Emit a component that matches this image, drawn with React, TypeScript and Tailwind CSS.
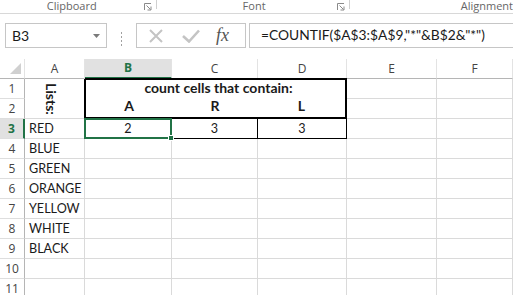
import React from "react";

function Launcher() {
  return (
    <svg width="8" height="8" viewBox="0 0 8 8" className="shrink-0">
      <path d="M0.5 7V0.5H7" stroke="#8a8a8a" strokeWidth="1" fill="none" />
      <path d="M2.5 2.5L6.5 6.5" stroke="#8a8a8a" strokeWidth="1" fill="none" />
      <path d="M3.5 7H7V3.5" stroke="#8a8a8a" strokeWidth="1" fill="none" />
    </svg>
  );
}

const cell = "border-r border-b border-[#dadada] flex items-center [font-family:Lato,sans-serif] text-[12.6px] text-[#1a1a1a] pt-[2px]";
const rowHdr = "border-r border-b border-r-[#b5b5b5] border-b-[#dedede] flex items-center justify-center [font-family:'Open_Sans',sans-serif] text-[12px] text-[#444] pt-[1px]";
const colHdr = "border-r border-b border-r-[#e3e3e3] border-b-[#b5b5b5] flex items-center justify-center [font-family:'Open_Sans',sans-serif] text-[12px] text-[#444]";

export default function App() {
  const lists = ["BLUE", "GREEN", "ORANGE", "YELLOW", "WHITE", "BLACK", "", ""];
  return (
    <div className="w-[513px] h-[295px] overflow-hidden bg-white relative">
      {/* ribbon group labels */}
      <div className="h-[14px] border-b border-[#d8d8d8] flex items-start [font-family:'Open_Sans',sans-serif] text-[11px] text-[#666] leading-[12px]">
        <span className="w-[143px] text-center pl-[1px]">Clipboard</span>
        <div className="mt-[3px] ml-[2px]"><Launcher /></div>
        <div className="ml-[4px] w-px h-[9px] bg-[#d0d0d0]" />
        <span className="w-[180px] text-center pl-[14px]">Font</span>
        <div className="mt-[3px]"><Launcher /></div>
        <div className="ml-[4px] w-px h-[9px] bg-[#d0d0d0]" />
        <span className="ml-[111px] whitespace-nowrap">Alignment</span>
      </div>

      {/* formula bar */}
      <div className="h-[45px] flex items-start pt-[9px]">
        <div className="ml-[5px] w-[102px] h-[25px] border border-[#c6c6c6] flex items-center justify-between pl-[6px] pr-[6px] [font-family:Lato,sans-serif] text-[14px] text-[#1a1a1a]">
          <span>B3</span>
          <svg width="7" height="4" viewBox="0 0 7 4"><path d="M0 0H7L3.5 4Z" fill="#7a7a7a" /></svg>
        </div>
        <div className="ml-[14px] mt-[9px] flex flex-col gap-[2px]">
          <div className="w-px h-[2px] bg-[#a0a0a0]" />
          <div className="w-px h-[2px] bg-[#a0a0a0]" />
          <div className="w-px h-[2px] bg-[#a0a0a0]" />
          <div className="w-px h-[2px] bg-[#a0a0a0]" />
        </div>
        <div className="ml-[14px] w-[110px] h-[25px] border border-[#c6c6c6] flex items-center">
          <svg width="20" height="14" viewBox="0 0 20 14" className="ml-[9px]">
            <path d="M4 1L16 13M16 1L4 13" stroke="#c4c4c4" strokeWidth="2" fill="none" />
          </svg>
          <svg width="20" height="14" viewBox="0 0 20 14" className="ml-[15px]">
            <path d="M2 7L8 12.5L18 1.5" stroke="#c4c4c4" strokeWidth="2.6" fill="none" />
          </svg>
          <span className="ml-[15px] [font-family:'Liberation_Serif',serif] italic text-[18px] text-[#555] leading-none -mt-[2px]">fx</span>
        </div>
        <div className="ml-[3px] flex-1 h-[25px] border border-r-0 border-[#c6c6c6] flex items-center pl-[11px] [font-family:Lato,sans-serif] text-[13.8px] text-[#1a1a1a] whitespace-nowrap">
          =COUNTIF($A$3:$A$9,"*"&amp;B$2&amp;"*")
        </div>
      </div>

      {/* grid */}
      <div className="grid grid-cols-[25px_60px_87px_86px_89px_90px_76px] grid-rows-[20px_repeat(11,20px)]">
        {/* header row */}
        <div className="border-r border-b border-r-[#e3e3e3] border-b-[#b5b5b5] relative">
          <svg width="11" height="11" viewBox="0 0 11 11" className="absolute right-[3px] bottom-[4px]">
            <path d="M11 0V11H0Z" fill="#d0d0d0" />
          </svg>
        </div>
        <div className={colHdr}>A</div>
        <div className="border-r border-r-[#e3e3e3] border-b-2 border-b-[#217346] bg-[#e1e1e1] flex items-center justify-center [font-family:'Open_Sans',sans-serif] text-[12px] font-bold text-[#217346]">B</div>
        <div className={colHdr}>C</div>
        <div className={colHdr}>D</div>
        <div className={colHdr}>E</div>
        <div className={colHdr}>F</div>

        {/* row 1 */}
        <div className={rowHdr}>1</div>
        <div className="row-span-2 border-b border-[#dadada] border-r border-r-black flex items-center justify-center">
          <span className="[writing-mode:vertical-rl] [font-family:Lato,sans-serif] font-bold text-[14px] text-[#1a1a1a] ml-[-6px]">Lists:</span>
        </div>
        <div className="col-span-3 row-span-2 border-t-2 border-l border-r-2 border-b-2 border-black -mt-[1px] bg-white grid grid-rows-2 grid-cols-[86px_86px_1fr] [font-family:Lato,sans-serif] font-bold text-[14px] text-[#1a1a1a]">
          <div className="col-span-3 flex items-end justify-center pb-[1px] pl-[6px]">count cells that contain:</div>
          <div className="flex items-end justify-center pb-[1px]">A</div>
          <div className="flex items-end justify-center pb-[1px]">R</div>
          <div className="flex items-end justify-center pb-[1px]">L</div>
        </div>
        <div className={cell} />
        <div className={cell} />

        {/* row 2 */}
        <div className={rowHdr}>2</div>
        <div className={cell} />
        <div className={cell} />

        {/* row 3 */}
        <div className="border-b border-b-[#dedede] border-r-2 border-r-[#217346] bg-[#e1e1e1] flex items-center justify-center [font-family:'Open_Sans',sans-serif] text-[12px] font-bold text-[#217346] pt-[1px]">3</div>
        <div className={`${cell} border-r-black pl-[4px]`}>RED</div>
        <div className={`${cell} border-r-black border-b-black justify-center relative`}>
          2
          <div className="absolute -left-[1px] -top-[1px] -right-[1px] -bottom-[1px] border-2 border-[#217346]" />
          <div className="absolute -right-[3px] -bottom-[3px] w-[6px] h-[6px] bg-[#217346] border border-white" />
        </div>
        <div className={`${cell} border-r-black border-b-black justify-center`}>3</div>
        <div className={`${cell} border-r-black border-b-black justify-center`}>3</div>
        <div className={cell} />
        <div className={cell} />

        {lists.map((t, i) => (
          <React.Fragment key={i}>
            <div className={rowHdr}>{i + 4}</div>
            <div className={`${cell} pl-[4px]`}>{t}</div>
            <div className={cell} />
            <div className={cell} />
            <div className={cell} />
            <div className={cell} />
            <div className={cell} />
          </React.Fragment>
        ))}
      </div>
    </div>
  );
}
